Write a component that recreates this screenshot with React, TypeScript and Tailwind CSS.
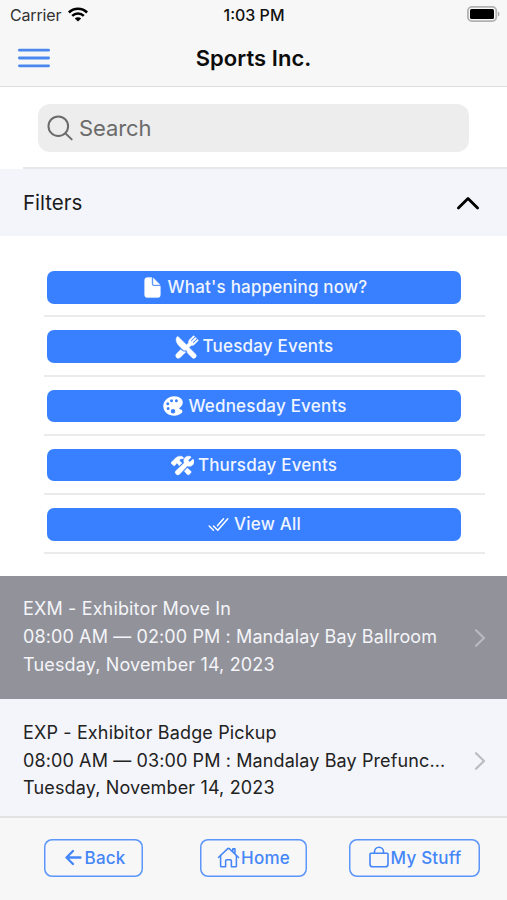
import type { ReactNode } from 'react';
import {
  IoArrowBack,
  IoBagOutline,
  IoCheckmarkDoneOutline,
  IoColorPalette,
  IoConstruct,
  IoDocument,
  IoHomeOutline,
  IoRestaurant,
} from 'react-icons/io5';

interface Filter {
  label: string;
  icon: ReactNode;
}

const filters: Filter[] = [
  { label: "What's happening now?", icon: <IoDocument size={23} strokeWidth={8} /> },
  { label: 'Tuesday Events', icon: <IoRestaurant size={24} strokeWidth={10} /> },
  { label: 'Wednesday Events', icon: <IoColorPalette size={24} className="-mr-px" /> },
  { label: 'Thursday Events', icon: <IoConstruct size={23} strokeWidth={10} /> },
  { label: 'View All', icon: <IoCheckmarkDoneOutline size={23} /> },
];

function StatusBar() {
  return (
    <div className="grid h-[30px] grid-cols-3 items-center pr-[7px] pl-[10px] text-[16px]">
      <div className="flex items-center gap-[7px] text-[#333]">
        <span className="tracking-[-0.15px]">Carrier</span>
        <svg width="20" height="15" viewBox="0 0 20 15" fill="none" stroke="#000" className="-mt-[2px]">
          <path d="M0.9 5.5a13 13 0 0 1 18.2 0" strokeWidth="2.6" />
          <path d="M4.2 8.9a8.3 8.3 0 0 1 11.6 0" strokeWidth="2.5" />
          <path d="M10 14.6 6.8 11.5a4.6 4.6 0 0 1 6.4 0Z" fill="#000" stroke="none" />
        </svg>
      </div>
      <span className="pr-[2px] text-center font-[550] whitespace-nowrap text-[#111]">1:03 PM</span>
      <div className="flex justify-end">
        <svg width="33" height="16" viewBox="0 0 33 16" className="-mt-[2px]">
          <rect x="0.9" y="0.9" width="28.4" height="14.2" rx="4" fill="#f7f7f7" stroke="#b2b2b2" strokeWidth="1.8" />
          <rect x="3" y="3" width="24" height="10" rx="1.5" fill="#000" />
          <path d="M31 5.5v5c2-1 2-4 0-5Z" fill="#a9a9a9" />
        </svg>
      </div>
    </div>
  );
}

function Header() {
  return (
    <header className="h-[87px] border-b border-[#dedede] bg-[#f7f7f7]">
      <StatusBar />
      <div className="grid h-[56px] grid-cols-[1fr_auto_1fr] items-center px-[18px]">
        <svg width="32" height="20" viewBox="0 0 32 20" stroke="#4a88ee" strokeWidth="2.8" strokeLinecap="round">
          <path d="M1.4 2.2h29.2M1.4 10h29.2M1.4 17.8h29.2" />
        </svg>
        <h1 className="text-[22px] font-semibold tracking-[0.05px] text-[#0c0c0c]">Sports Inc.</h1>
        <span />
      </div>
    </header>
  );
}

function SearchBox() {
  return (
    <div className="h-[80px] px-[38px] pt-[17px]">
      <div className="flex h-12 items-center gap-[5px] rounded-[12px] bg-[#ededed] pl-[9px] text-[#6b6b6b]">
        <svg width="27" height="28" viewBox="0 0 27 28" fill="none" stroke="currentColor" strokeWidth="2" strokeLinecap="round">
          <circle cx="11.3" cy="12.2" r="9.8" />
          <path d="m18.5 19.4 6.2 6" />
        </svg>
        <span className="text-[22px] tracking-[-0.1px]">Search</span>
      </div>
    </div>
  );
}

function FilterButton({ label, icon }: Filter) {
  return (
    <li className="h-[59.25px] border-b-2 border-[#ebebed] pt-[13px] pr-[24px] pl-[3px]">
      <button className="flex h-[32.5px] w-full items-center justify-center gap-1 rounded-[7px] bg-[#3880ff] text-[17px] font-medium tracking-[0.2px] text-white">
        <span>{icon}</span>
        <span className="pt-px text-[#f0f5ff]">{label}</span>
      </button>
    </li>
  );
}

interface EventRowProps {
  title: string;
  detail: string;
  date: string;
  active?: boolean;
}

function EventRow({ title, detail, date, active }: EventRowProps) {
  const colors = active
    ? 'h-[123px] pt-[19px] bg-[#92929b] text-[#f4f5f8]'
    : 'h-[117px] pt-[20px] bg-[#f4f5fa] text-[#222]';
  const chevron = active ? 'mt-[33px] text-[#b9b9bf]' : 'mt-[32px] text-[#bcbcc0]';

  return (
    <div className={`flex items-start pr-[21px] pl-[23px] text-[18px] tracking-[0.15px] ${colors}`}>
      <div className="min-w-0 flex-1 whitespace-nowrap">
        <div className="leading-[28px]">{title}</div>
        <div className="leading-[28px] tracking-[0.11px]">{detail}</div>
        <div className={active ? 'leading-[27px]' : 'leading-[25px]'}>{date}</div>
      </div>
      <svg
        width="12"
        height="20"
        viewBox="0 0 12 20"
        fill="none"
        stroke="currentColor"
        strokeWidth="2.2"
        strokeLinecap="round"
        strokeLinejoin="round"
        className={chevron}
      >
        <path d="m2 2.2 8 7.8-8 7.8" />
      </svg>
    </div>
  );
}

function FooterButton({ width, children }: { width: string; children: ReactNode }) {
  return (
    <button className={`flex h-[37.5px] items-center justify-center rounded-[8px] text-[17px] font-medium tracking-[0.2px] text-[#4486f7] shadow-[inset_0_0_0_1.5px_#5c96fa] ${width}`}>
      {children}
    </button>
  );
}

export default function App() {
  return (
    <div className="flex h-[900px] w-[507px] flex-col overflow-hidden bg-white font-['Inter',sans-serif]">
      <Header />
      <SearchBox />
      <div className="ml-[23px] h-[2px] bg-[#e6e7e9]" />
      <div className="flex h-[67px] items-center justify-between bg-[#f4f5fa] pr-[26px] pl-[23px] text-[#1a1a1a]">
        <span className="pt-[2px] text-[20.5px]">Filters</span>
        <svg width="25" height="16" viewBox="0 0 25 16" fill="none" stroke="#000" strokeWidth="2.8" strokeLinecap="round" strokeLinejoin="round">
          <path d="M2.4 13 12 3.4l9.6 9.6" />
        </svg>
      </div>
      <ul className="mt-[22px] mr-[22px] ml-[44px] h-[318px]">
        {filters.map((filter) => (
          <FilterButton key={filter.label} {...filter} />
        ))}
      </ul>
      <EventRow
        active
        title="EXM - Exhibitor Move In"
        detail="08:00 AM — 02:00 PM : Mandalay Bay Ballroom"
        date="Tuesday, November 14, 2023"
      />
      <EventRow
        title="EXP - Exhibitor Badge Pickup"
        detail="08:00 AM — 03:00 PM : Mandalay Bay Prefunc..."
        date="Tuesday, November 14, 2023"
      />
      <footer className="flex flex-1 items-start border-t-2 border-[#e2e2e4] bg-[#f7f7f7] pt-[21px] pl-[44px]">
        <FooterButton width="w-[99px]">
          <IoArrowBack size={23} className="[&_path]:[stroke-width:52]" />
          <span className="pt-[2px]">Back</span>
        </FooterButton>
        <FooterButton width="ml-[57px] w-[107px]">
          <IoHomeOutline size={23} className="[&_path]:[stroke-width:34]" />
          <span className="pt-[2px] pl-px">Home</span>
        </FooterButton>
        <FooterButton width="ml-[42px] w-[131px]">
          <IoBagOutline size={24} className="-mt-px mr-px -ml-px [&_path]:[stroke-width:34]" />
          <span className="-ml-px pt-[2px]">My Stuff</span>
        </FooterButton>
      </footer>
    </div>
  );
}
